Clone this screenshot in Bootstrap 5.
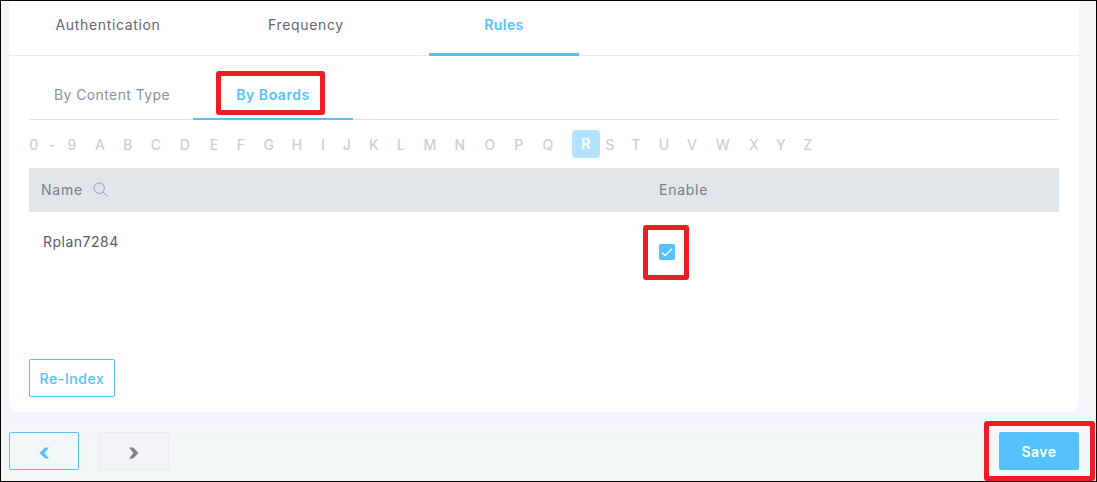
<!DOCTYPE html>
<html lang="en">
<head>
  <meta charset="UTF-8">
  <title>Rules - By Boards</title>
  <meta name="viewport" content="width=device-width, initial-scale=1">
  <link href="https://cdn.jsdelivr.net/npm/bootstrap@5.3.0/dist/css/bootstrap.min.css" rel="stylesheet">
  <style>
    html, body { height: 100%; }
    body {
      position: relative;
      height: 482px;
      overflow: hidden;
      font-family: "Inter", "Noto Sans", sans-serif;
      font-size: 14px;
      letter-spacing: .5px;
      border: 1px solid #000;
      background: linear-gradient(180deg, #f5f5fd 0%, #f5f5fd 86%, #f2f7f7 93%, #f2f7f7 100%);
      padding: 0 17px 0 8px;
    }
    .sheet {
      height: 411px;
      background: #fff;
      border-radius: 0 0 12px 12px;
    }
    .top-tabs { height: 55px; border-bottom: 1px solid #e9ecef; padding-left: 24px; gap: 48px; }
    .top-tab {
      width: 150px; height: 55px; padding-top: 13px; text-align: center;
      color: #666675; letter-spacing: .65px;
    }
    .top-tab.on { color: #55c2fd; font-weight: 600; letter-spacing: .4px; border-bottom: 3px solid #55c2fd; }
    .inner { padding: 0 20px; }
    .sub-tabs { height: 64px; border-bottom: 1px solid #dee2e6; padding-left: 2px; }
    .sub-tab {
      width: 162px; height: 64px; padding-top: 28px; text-align: center;
      color: #8792a6; letter-spacing: .4px;
    }
    .sub-tab.on { width: 160px; color: #55c2fd; font-weight: 600; letter-spacing: .55px; border-bottom: 2px solid #55c2fd; margin-bottom: -1px; }
    .alpha { height: 48px; color: #cfcfcf; font-weight: 500; letter-spacing: .3px; }
    .alpha span { flex: none; width: 20px; text-align: center; }
    .alpha .cur {
      width: 28px; height: 28px; line-height: 28px; border-radius: 4px;
      background: #b3e3fe; color: #fff; font-weight: 600;
    }
    .board-table { width: 100%; table-layout: fixed; margin: 0; }
    .board-table th {
      height: 44px; background: #e0e6e9; color: #7b7f88; font-weight: 400;
      padding: 0 0 2px 12px; vertical-align: middle; border: 0; letter-spacing: .75px;
    }
    .board-table th + th { padding-left: 0; }
    .board-table td { border: 0; padding: 19px 0 0 14px; color: #5a5a63; vertical-align: top; height: 110px; }
    .board-table td + td { padding: 32px 0 0 0; }
    .name-col { width: 630px; }
    .name-head { gap: 10px; }
    .tick {
      width: 16px; height: 16px; border-radius: 2px; background: #55c2fd; display: block;
    }
    .tick svg { display: block; }
    .reindex, .reindex:hover {
      margin-top: 37px; width: 86px; height: 38px; padding: 0;
      border: 1px solid #55c2fd; border-radius: 2px; color: #55c2fd; font-size: 14px; font-weight: 500; letter-spacing: .6px; background: #fff;
    }
    .foot { height: 38px; margin-top: 20px; }
    .pager {
      width: 70px; height: 38px; padding: 0; border-radius: 2px;
      border: 1px solid #55c2fd; background: transparent;
    }
    .pager.off { margin-left: 20px; border-color: #ececf0; background: #f3f4f7; }
    .save-btn, .save-btn:hover {
      width: 80px; height: 38px; padding: 0; border: 0; border-radius: 2px;
      background: #55c2fd; color: #fff; font-weight: 600; font-size: 14px; letter-spacing: .5px;
    }
    .callout { position: absolute; border: 5px solid #ee1c25; border-radius: 3px; }
    .c-boards { left: 215px; top: 70px; width: 109px; height: 44px; }
    .c-check { left: 642px; top: 224px; width: 46px; height: 55px; }
    .c-save { left: 983px; top: 420px; width: 111px; height: 60px; }
  </style>
</head>
<body>
  <div class="sheet">
    <div class="d-flex top-tabs">
      <div class="top-tab">Authentication</div>
      <div class="top-tab">Frequency</div>
      <div class="top-tab on">Rules</div>
    </div>
    <div class="inner">
      <div class="d-flex sub-tabs">
        <div class="sub-tab">By Content Type</div>
        <div class="sub-tab on">By Boards</div>
      </div>
      <div class="d-flex align-items-center alpha" id="alpha"></div>
      <table class="table board-table">
        <thead>
          <tr>
            <th class="name-col">
              <span class="d-inline-flex align-items-center name-head">Name
                <svg width="15" height="15" viewBox="0 0 15 15" fill="none" stroke="#9aa0a6" stroke-width="1"><circle cx="6.2" cy="6.2" r="5.2"/><path d="M10 10l4.5 4.5"/></svg>
              </span>
            </th>
            <th>Enable</th>
          </tr>
        </thead>
        <tbody>
          <tr>
            <td>Rplan7284</td>
            <td>
              <span class="tick">
                <svg width="16" height="16" viewBox="0 0 16 16" fill="none" stroke="#fff" stroke-width="1.3"><path d="M3 8.5l3.2 3L13 4.8"/></svg>
              </span>
            </td>
          </tr>
        </tbody>
      </table>
      <button type="button" class="btn reindex">Re-Index</button>
    </div>
  </div>
  <div class="d-flex align-items-center foot">
    <button type="button" class="btn pager" aria-label="Previous">
      <svg width="12" height="12" viewBox="0 0 12 12" fill="#55c2fd"><path d="M7 0.5h4L6.5 6l4.5 5.5H7L1.5 6z"/></svg>
    </button>
    <button type="button" class="btn pager off" aria-label="Next">
      <svg width="12" height="12" viewBox="0 0 12 12" fill="#7d7f8e"><path d="M1 0.5h4L10.5 6 5 11.5H1L5.5 6z"/></svg>
    </button>
    <button type="button" class="btn save-btn ms-auto">Save</button>
  </div>

  <div class="callout c-boards"></div>
  <div class="callout c-check"></div>
  <div class="callout c-save"></div>

  <script>
    // alphabet bar: label and its centre x in the page
    const letters = [["0",34],["-",52],["9",72],["A",100],["B",128],["C",156],["D",185],["E",214],["F",241],["G",269],["H",297],["I",323],["J",347],["K",374],["L",401],["M",430],["N",460],["O",490],["P",519],["Q",548],["R",586],["S",610],["T",636],["U",664],["V",692],["W",723],["X",754],["Y",781],["Z",808]];
    const bar = document.getElementById("alpha");
    let edge = 29;
    letters.forEach(([ch, x]) => {
      const w = ch === "R" ? 28 : 20;
      const el = document.createElement("span");
      el.textContent = ch;
      if (ch === "R") el.className = "cur";
      el.style.marginLeft = (x - w / 2 - edge) + "px";
      bar.appendChild(el);
      edge = x + w / 2;
    });
  </script>
  <script src="https://cdn.jsdelivr.net/npm/bootstrap@5.3.0/dist/js/bootstrap.bundle.min.js"></script>
</body>
</html>
